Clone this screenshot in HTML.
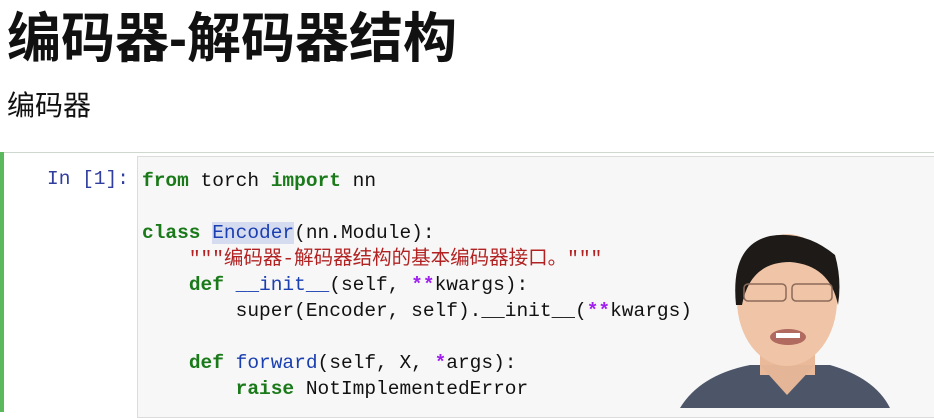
<!DOCTYPE html>
<html><head><meta charset="utf-8"><style>
body{margin:0;width:934px;height:408px;overflow:hidden;background:#fff;position:relative;font-family:"Liberation Sans","Noto Sans CJK SC",sans-serif}
.h1{position:absolute;left:7px;top:-6px;font-size:54px;font-weight:bold;color:#111;letter-spacing:0px}
.h2{position:absolute;left:7px;top:84px;font-size:28px;color:#111}
.cell{position:absolute;left:0;top:152px;width:934px;height:260px;border-top:1px solid #cfd8cf}
.bar{position:absolute;left:0;top:152px;width:4px;height:260px;background:#5cb85c}
.prompt{position:absolute;left:47px;top:168px;font:19.5px "Liberation Mono",monospace;color:#303f9f}
.code{position:absolute;left:137px;top:156px;width:800px;height:260px;background:#f7f7f7;border:1px solid #dcdcdc}
pre{margin:0;position:absolute;left:142px;top:168px;font:19.5px/26px "Liberation Mono","Noto Sans CJK SC",monospace;color:#111}
.k{color:#1a7a1a;font-weight:bold}.n{color:#1a3fb0}.s{color:#b22222}.o{color:#a020f0;font-weight:bold}
.hl{background:#d6dcf0}
</style></head><body>
<div class="h1">编码器-解码器结构</div>
<div class="h2">编码器</div>
<div class="cell"></div><div class="bar"></div>
<div class="code"></div>
<div class="prompt">In [1]:</div>
<pre><span class="k">from</span> torch <span class="k">import</span> nn

<span class="k">class</span> <span class="n hl">Encoder</span>(nn.Module):
    <span class="s">"""编码器-解码器结构的基本编码器接口。"""</span>
    <span class="k">def</span> <span class="n">__init__</span>(self, <span class="o">**</span>kwargs):
        super(Encoder, self).__init__(<span class="o">**</span>kwargs)

    <span class="k">def</span> <span class="n">forward</span>(self, X, <span class="o">*</span>args):
        <span class="k">raise</span> NotImplementedError</pre>
<svg style="position:absolute;left:0;top:0" width="934" height="408">
<path d="M680 408 Q700 375 750 365 L830 365 Q875 378 890 408Z" fill="#4d5668"/>
<rect x="760" y="330" width="55" height="45" fill="#e9b99a"/>
<path d="M760 365 L787 395 L815 365Z" fill="#e5b597"/>
<ellipse cx="787" cy="300" rx="50" ry="66" fill="#f0c4a6"/>
<path d="M736 305 Q730 245 770 236 Q805 230 835 255 Q842 280 838 305 Q830 265 790 262 Q750 262 742 305Z" fill="#1e1a18"/>
<rect x="744" y="284" width="42" height="17" rx="4" fill="none" stroke="#8a6a5a" stroke-width="1.5"/>
<rect x="792" y="284" width="40" height="17" rx="4" fill="none" stroke="#8a6a5a" stroke-width="1.5"/>
<ellipse cx="788" cy="337" rx="18" ry="8" fill="#b06a60"/>
<rect x="776" y="333" width="24" height="5" fill="#fff"/>
</svg>
</body></html>
